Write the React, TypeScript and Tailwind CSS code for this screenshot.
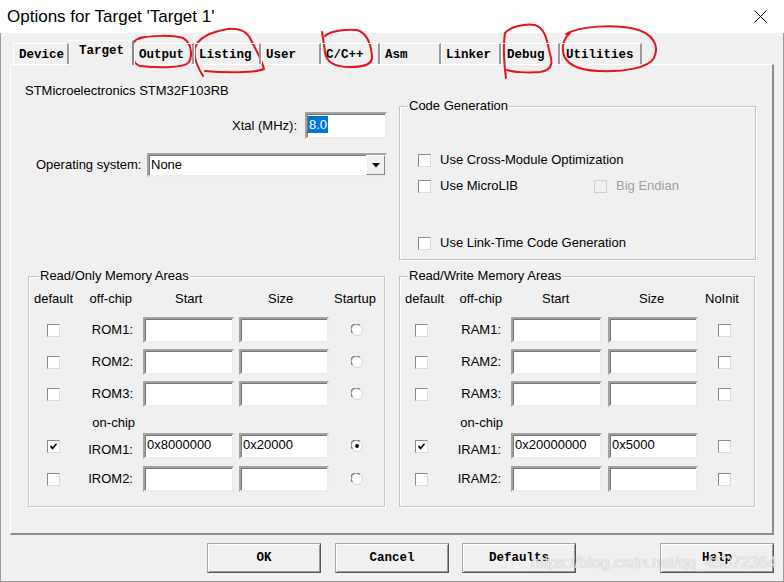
import React from 'react';

const MONO = "font-['Liberation_Mono','DejaVu_Sans_Mono',monospace] font-bold text-[12.5px] leading-[13px]";

function Check({ checked = false, disabled = false }: { checked?: boolean; disabled?: boolean }) {
    return (
        <span
            className={
                disabled
                    ? 'relative inline-block w-[13px] h-[13px] shrink-0 bg-[#f0f0f0] border border-[#cfcfcf]'
                    : 'relative inline-block w-[13px] h-[13px] shrink-0 bg-white border border-t-[#8a8a8a] border-l-[#8a8a8a] border-r-[#dcdcdc] border-b-[#dcdcdc]'
            }>
            {checked && (
                <svg width="11" height="11" viewBox="0 0 11 11" className="absolute left-0 top-0">
                    <path d="M2.5 5 L4.5 7.5 L8.5 2.8" fill="none" stroke="#000" strokeWidth="1.7" />
                </svg>
            )}
        </span>
    );
}

function Radio({ checked = false }: { checked?: boolean }) {
    return (
        <svg width="12" height="12" viewBox="0 0 12 12" className="shrink-0">
            <circle cx="6" cy="6" r="5.5" fill="#fff" stroke="#d4d4d4" />
            <path d="M1.4 8.8 A5.2 5.2 0 0 1 8.8 1.4" fill="none" stroke="#6e6e6e" strokeWidth="1.1" />
            {checked && <circle cx="6" cy="6" r="1.9" fill="#000" />}
        </svg>
    );
}

function Field({ value = '', w }: { value?: string; w: string }) {
    return (
        <div
            className={`${w} h-[26px] shrink-0 bg-white border-2 border-t-[#a3a3a3] border-l-[#a3a3a3] border-r-[#ececec] border-b-[#ececec] shadow-[inset_1px_1px_0_#777] pl-[2px] pt-[2px] leading-[16px] text-[13px]`}>
            {value}
        </div>
    );
}

function Group({ title, legendPos, className, children }: { title: string; legendPos: string; className: string; children: React.ReactNode }) {
    return (
        <div className={`relative border border-[#c4c4c4] shadow-[inset_1px_1px_0_#fff,1px_1px_0_#fff] flex flex-col ${className}`}>
            <span className={`absolute top-[-9px] ${legendPos} px-[1px] bg-[#f0f0f0] leading-[16px]`}>{title}</span>
            {children}
        </div>
    );
}

type MemRow = { label: string; start?: string; size?: string; def?: boolean; last?: boolean; gap: string; nudge?: boolean };

function MemoryGroup(props: {
    title: string;
    legendPos: string;
    width: string;
    aW: string;
    bW: string;
    dMl: string;
    defHead: string;
    offHead: string;
    startHead: string;
    sizeHead: string;
    lastHead: string;
    lastLabel: string;
    checkPad: string;
    lastPad: string;
    radio: boolean;
    rows: MemRow[];
    onchipAfter: number;
}) {
    const { aW, bW, dMl } = props;
    return (
        <Group title={props.title} legendPos={props.legendPos} className={`${props.width} h-[231px]`}>
            <div className="mt-[14px] h-[16px] flex">
                <div className={`${aW} ${props.defHead}`}>default</div>
                <div className={`${bW} text-right ${props.offHead}`}>off-chip</div>
                <div className={`w-[91px] ml-[3px] ${props.startHead}`}>Start</div>
                <div className={`w-[90px] ${dMl} ${props.sizeHead}`}>Size</div>
                <div className={props.lastHead}>{props.lastLabel}</div>
            </div>
            {props.rows.map((r, i) => (
                <React.Fragment key={r.label}>
                    {i === props.onchipAfter && (
                        <div className="mt-[8px] h-[16px] flex">
                            <div className={aW} />
                            <div className={`${bW} text-right pr-[5px]`}>on-chip</div>
                        </div>
                    )}
                    <div className={`${r.gap} h-[26px] flex items-center`}>
                        <div className={`${aW} flex ${props.checkPad}`}>
                            <Check checked={r.def} />
                        </div>
                        <div className={`${bW} text-right pr-[7px] ${r.nudge ? 'translate-y-[4px]' : ''}`}>{r.label}</div>
                        <div className="ml-[3px]">
                            <Field w="w-[91px]" value={r.start} />
                        </div>
                        <div className={dMl}>
                            <Field w="w-[90px]" value={r.size} />
                        </div>
                        <div className={`flex ${props.lastPad}`}>
                            {props.radio ? <Radio checked={r.last} /> : <Check checked={r.last} />}
                        </div>
                    </div>
                </React.Fragment>
            ))}
        </Group>
    );
}

const tabs = [
    { label: 'Device', cls: 'w-[56px] pl-[5px]' },
    { label: 'Target', cls: 'w-[65px]', active: true },
    { label: 'Output', cls: 'w-[60px] pl-[4px]' },
    { label: 'Listing', cls: 'w-[67px] pl-[4px]' },
    { label: 'User', cls: 'w-[60px] pl-[4px]' },
    { label: 'C/C++', cls: 'w-[59px] pl-[4px]' },
    { label: 'Asm', cls: 'w-[61px] pl-[4px]' },
    { label: 'Linker', cls: 'w-[60px] pl-[4px]' },
    { label: 'Debug', cls: 'w-[59px] pl-[5px]' },
    { label: 'Utilities', cls: 'w-[82px] pl-[5px]' },
];

function Button({ label, className = '' }: { label: string; className?: string }) {
    return (
        <div
            className={`w-[114px] h-[30px] flex items-center justify-center bg-[#f0f0f0] border border-t-[#a8a8a8] border-l-[#a8a8a8] border-r-[#555] border-b-[#555] shadow-[inset_1px_1px_0_#fff,inset_-1px_-1px_0_#9a9a9a] ${MONO} ${className}`}>
            {label}
        </div>
    );
}

export default function App() {
    return (
        <div className="w-[784px] h-[582px] relative overflow-hidden bg-[#f0f0f0] text-black font-['Liberation_Sans',Arial,sans-serif] text-[13px] leading-[16px]">
            {/* title bar */}
            <div className="h-[33px] bg-white flex items-center justify-between pl-[7px] pr-[17px]">
                <span className="text-[17px] leading-[20px]">Options for Target 'Target 1'</span>
                <svg width="13" height="13" viewBox="0 0 13 13">
                    <path d="M0.5 0.5 L12.5 12.5 M12.5 0.5 L0.5 12.5" stroke="#000" strokeWidth="1" />
                </svg>
            </div>

            <div className="h-[549px] border-l border-r border-b border-[#9c9c9c] flex flex-col">
                {/* tabs */}
                <div className="mt-[7px] h-[24px] flex items-end pl-[12px] relative z-10">
                    {tabs.map(t =>
                        t.active ? (
                            <div
                                key={t.label}
                                className={`${t.cls} h-[25px] -mb-[1px] bg-[#f0f0f0] border-t border-l border-white border-r-2 border-r-[#8a8a8a] pl-[9px] pt-[4px] ${MONO}`}>
                                {t.label}
                            </div>
                        ) : (
                            <div
                                key={t.label}
                                className={`${t.cls} h-[21px] flex items-center pt-[2px] border-t border-l border-white border-r-2 border-r-[#9a9a9a] ${MONO}`}>
                                {t.label}
                            </div>
                        )
                    )}
                </div>

                {/* tab page */}
                <div className="ml-[9px] w-[764px] h-[471px] bg-[#f0f0f0] border-t border-l border-white border-r-2 border-b-2 border-r-[#8d8d8d] border-b-[#8d8d8d] flex flex-col">
                    <div className="flex">
                        <div className="w-[388px] flex flex-col">
                            <div className="mt-[18px] pl-[14px]">STMicroelectronics STM32F103RB</div>
                            <div className="mt-[13px] flex items-center justify-end pr-[12px] gap-[8px]">
                                <span>Xtal (MHz):</span>
                                <div className="w-[82px] h-[27px] bg-white border-2 border-t-[#a3a3a3] border-l-[#a3a3a3] border-r-[#ececec] border-b-[#ececec] shadow-[inset_1px_1px_0_#777] pl-[1px] pt-[2px]">
                                    <span className="bg-[#0078d7] text-white leading-[17px] inline-block px-[1px]">8.0</span>
                                </div>
                            </div>
                            <div className="mt-[14px] flex items-center justify-between pl-[25px] pr-[12px]">
                                <span>Operating system:</span>
                                <div className="w-[240px] h-[24px] bg-white border-2 border-t-[#a3a3a3] border-l-[#a3a3a3] border-r-[#ececec] border-b-[#ececec] shadow-[inset_1px_1px_0_#777] flex items-center justify-between pl-[2px]">
                                    <span>None</span>
                                    <div className="w-[19px] h-[20px] bg-[#f0f0f0] border border-t-[#fff] border-l-[#fff] border-r-[#8a8a8a] border-b-[#8a8a8a] flex items-center justify-center">
                                        <svg width="8" height="5" viewBox="0 0 8 5">
                                            <path d="M0 0 H8 L4 4.5 Z" fill="#000" />
                                        </svg>
                                    </div>
                                </div>
                            </div>
                        </div>

                        <Group title="Code Generation" legendPos="left-[8px]" className="mt-[41px] w-[357px] h-[154px]">
                            <div className="mt-[45px] h-[16px] flex items-center pl-[18px]">
                                <Check />
                                <span className="ml-[9px]">Use Cross-Module Optimization</span>
                            </div>
                            <div className="mt-[10px] h-[16px] flex items-center pl-[18px]">
                                <div className="w-[176px] flex items-center">
                                    <Check />
                                    <span className="ml-[9px]">Use MicroLIB</span>
                                </div>
                                <Check disabled />
                                <span className="ml-[9px] text-[#a0a0a0]">Big Endian</span>
                            </div>
                            <div className="mt-[41px] h-[16px] flex items-center pl-[18px]">
                                <Check />
                                <span className="ml-[9px]">Use Link-Time Code Generation</span>
                            </div>
                        </Group>
                    </div>

                    {/* memory areas */}
                    <div className="mt-[16px] flex pl-[17px] gap-[14px]">
                        <MemoryGroup
                            title="Read/Only Memory Areas"
                            legendPos="left-[10px]"
                            width="w-[357px]"
                            aW="w-[51px]"
                            bW="w-[60px]"
                            dMl="ml-[5px]"
                            defHead="pl-[5px]"
                            offHead="pr-[8px]"
                            startHead="pl-[32px]"
                            sizeHead="pl-[29px]"
                            lastHead="pl-[5px]"
                            lastLabel="Startup"
                            checkPad="pl-[18px]"
                            lastPad="pl-[22px]"
                            radio
                            onchipAfter={3}
                            rows={[
                                { label: 'ROM1:', gap: 'mt-[10px]' },
                                { label: 'ROM2:', gap: 'mt-[6px]' },
                                { label: 'ROM3:', gap: 'mt-[6px]' },
                                { label: 'IROM1:', gap: 'mt-[2px]', def: true, last: true, start: '0x8000000', size: '0x20000', nudge: true },
                                { label: 'IROM2:', gap: 'mt-[7px]' },
                            ]}
                        />
                        <MemoryGroup
                            title="Read/Write Memory Areas"
                            legendPos="left-[8px]"
                            width="w-[356px]"
                            aW="w-[51px]"
                            bW="w-[57px]"
                            dMl="ml-[6px]"
                            defHead="pl-[5px]"
                            offHead="pr-[6px]"
                            startHead="pl-[31px]"
                            sizeHead="pl-[31px]"
                            lastHead="pl-[7px]"
                            lastLabel="NoInit"
                            checkPad="pl-[15px]"
                            lastPad="pl-[20px]"
                            radio={false}
                            onchipAfter={3}
                            rows={[
                                { label: 'RAM1:', gap: 'mt-[10px]' },
                                { label: 'RAM2:', gap: 'mt-[6px]' },
                                { label: 'RAM3:', gap: 'mt-[6px]' },
                                { label: 'IRAM1:', gap: 'mt-[2px]', def: true, start: '0x20000000', size: '0x5000', nudge: true },
                                { label: 'IRAM2:', gap: 'mt-[7px]' },
                            ]}
                        />
                    </div>
                </div>

                {/* dialog buttons */}
                <div className="mt-[8px] flex pl-[206px]">
                    <Button label="OK" />
                    <Button label="Cancel" className="ml-[14px]" />
                    <Button label="Defaults" className="ml-[13px]" />
                    <Button label="Help" className="ml-[84px]" />
                </div>
            </div>

            {/* watermark */}
            <div className="absolute left-[531px] top-[554px] text-[16px] leading-[18px] whitespace-nowrap text-white/80 [text-shadow:0_0_1px_rgba(0,0,0,0.35)] pointer-events-none">
                https://blog.csdn.net/qq_45072364
            </div>

            {/* red hand-drawn marks */}
            <svg className="absolute left-0 top-0 pointer-events-none" width="784" height="582" viewBox="0 0 784 582">
                <g fill="none" stroke="#e8141b" strokeWidth="2" strokeLinecap="round">
                    <path d="M138 39 C150 35 172 35 183 38 C191 42 193 55 189 62 C185 68 160 68 140 66 C133 64 131 55 132 47 C133 41 138 37 146 37" />
                    <path d="M203 76 C198 68 193 58 195 48 C198 38 210 32 228 29 C240 28 247 31 251 40 C256 50 262 60 264 69 C255 73 225 73 205 71" />
                    <path d="M325 36 C330 31 345 29 357 30 C367 33 371 45 372 56 C373 64 365 67 350 67 C335 67 326 62 325 52 C324 44 323 38 322 32" />
                    <path d="M506 78 C504 65 503 45 505 33 C510 27 525 23 535 25 C545 28 547 40 549 50 C552 60 555 70 540 72 C527 73 512 72 507 70" />
                    <path d="M566 34 C580 26 615 24 635 29 C652 33 660 45 654 58 C648 68 625 72 598 71 C578 70 565 64 563 52 C562 44 564 38 570 33" />
                </g>
            </svg>
        </div>
    );
}
